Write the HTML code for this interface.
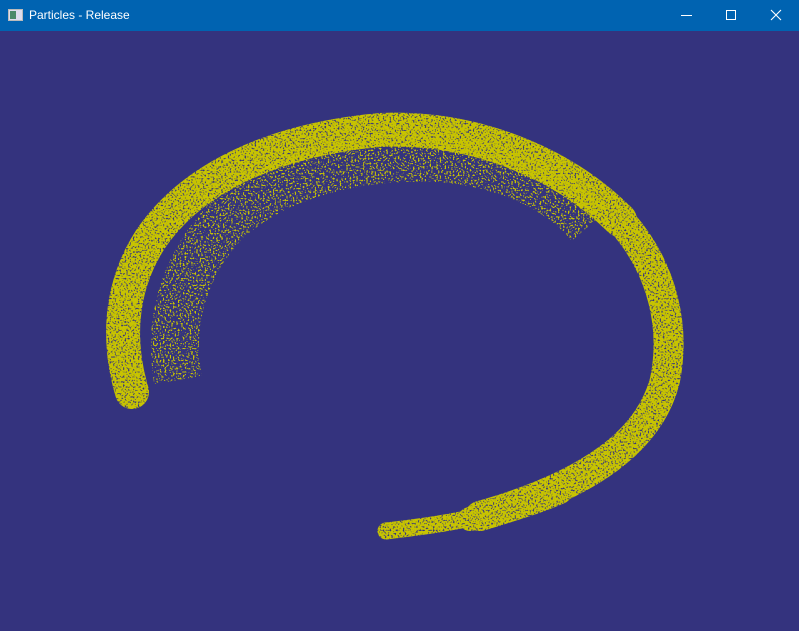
<!DOCTYPE html>
<html><head><meta charset="utf-8"><style>
html,body{margin:0;padding:0;width:799px;height:631px;overflow:hidden;background:#34337e;}
.bar{position:absolute;left:0;top:0;width:799px;height:31px;background:#0063b1;}
.t{position:absolute;left:29px;top:8px;color:#fff;font:12px "Liberation Sans",sans-serif;}
</style></head><body>
<div class="bar">
<svg width="799" height="31" style="position:absolute;left:0;top:0">
<rect x="8.5" y="9.5" width="14" height="11" fill="#dde" stroke="#bbb"/>
<rect x="10" y="11" width="6" height="8" fill="#4a8a6a"/>
<line x1="681" y1="15.5" x2="692" y2="15.5" stroke="#fff"/>
<rect x="726.5" y="10.5" width="9" height="9" fill="none" stroke="#fff"/>
<path d="M771 10 L781 20 M781 10 L771 20" stroke="#fff" stroke-width="1.1"/>
</svg>
<div class="t">Particles - Release</div>
</div>
<svg width="799" height="631" style="position:absolute;left:0;top:0" viewBox="0 0 799 631">
<defs>
<filter id="n" filterUnits="userSpaceOnUse" x="0" y="0" width="799" height="631">
<feTurbulence type="fractalNoise" baseFrequency="0.6" numOctaves="1" seed="3" result="t"/>
<feColorMatrix in="t" type="matrix" values="0 0 0 0 0  0 0 0 0 0  0 0 0 0 0  0 0 0 -6 4.2" result="m"/>
<feComposite in="SourceGraphic" in2="m" operator="in"/>
</filter>
<filter id="s" filterUnits="userSpaceOnUse" x="0" y="0" width="799" height="631">
<feTurbulence type="fractalNoise" baseFrequency="0.6" numOctaves="1" seed="9" result="t"/>
<feColorMatrix in="t" type="matrix" values="0 0 0 0 0  0 0 0 0 0  0 0 0 0 0  0 0 0 -12 5.4" result="m"/>
<feComposite in="SourceGraphic" in2="m" operator="in"/>
</filter>
</defs>
<g fill="none" stroke="#c8c400" stroke-linejoin="round">
<path filter="url(#s)" d="M178,380 C168,325 182,268 225,222 C280,172 360,155 440,158 C510,164 560,190 590,225" stroke-width="48" stroke-linecap="butt"/>
<g filter="url(#n)" stroke-linecap="round">
<path d="M132,392 C118,345 118,290 150,240 C190,180 270,140 380,130 C470,126 560,160 620,220" stroke-width="34"/>
<path d="M620,220 C665,270 675,330 665,380 C650,440 590,485 480,516" stroke-width="30"/>
<path d="M560,492 C530,505 505,512 470,519" stroke-width="24"/>
<path d="M480,516 C450,523 420,527 386,531" stroke-width="17"/>
</g>
</g>
</svg>
</body></html>
